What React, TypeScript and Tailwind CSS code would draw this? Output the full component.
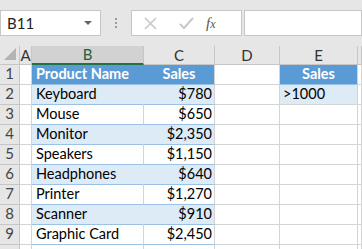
const rows: [string, string][] = [
  ['Keyboard', '$780'],
  ['Mouse', '$650'],
  ['Monitor', '$2,350'],
  ['Speakers', '$1,150'],
  ['Headphones', '$640'],
  ['Printer', '$1,270'],
  ['Scanner', '$910'],
  ['Graphic Card', '$2,450'],
];

const font = { fontFamily: 'Lato, "Liberation Sans", sans-serif' };

function Toolbar() {
  return (
    <div className="flex h-[46px] items-start bg-[#e6e6e6] pt-[10px]">
      <div className="flex h-[26px] w-[101px] items-center justify-between border border-[#c6c6c6] bg-white pl-[6px] pr-[8px] text-[15px] text-[#222]">
        <span>B11</span>
        <span className="h-0 w-0 border-x-[4px] border-t-[4px] border-x-transparent border-t-[#666]" />
      </div>
      <div className="flex h-[26px] w-[30px] flex-col items-center justify-center gap-[2px]">
        <span className="h-[2px] w-[2px] bg-[#9a9a9a]" />
        <span className="h-[2px] w-[2px] bg-[#9a9a9a]" />
        <span className="h-[2px] w-[2px] bg-[#9a9a9a]" />
      </div>
      <div className="flex h-[26px] w-[111px] items-center border border-[#c6c6c6] bg-white">
        <svg width="36" height="26" viewBox="0 0 36 26" className="shrink-0">
          <path d="M13 8 L24 19 M24 8 L13 19" stroke="#c8c8c8" strokeWidth="1.6" />
        </svg>
        <svg width="36" height="26" viewBox="0 0 36 26" className="shrink-0">
          <path d="M12 14 L16 18 L25 8" stroke="#c8c8c8" strokeWidth="2" fill="none" />
        </svg>
        <span
          className="ml-[2px] text-[15px] italic text-[#555]"
          style={{ fontFamily: '"Liberation Serif", serif' }}
        >
          f<span className="text-[12px]">x</span>
        </span>
      </div>
      <div className="ml-[2px] h-[26px] flex-1 border border-[#c6c6c6] bg-white" />
    </div>
  );
}

function Header() {
  const hd = 'flex items-center justify-center border-r border-b border-[#c6c6c6] bg-[#e6e6e6] text-[15px] text-[#333]';
  return (
    <>
      <div className={hd + ' relative'}>
        <svg width="12" height="12" viewBox="0 0 12 12" className="absolute bottom-[4px] right-[3px]">
          <path d="M12 0 L12 12 L0 12 Z" fill="#b4b4b4" />
        </svg>
      </div>
      <div className={hd}>A</div>
      <div className="flex items-center justify-center border-r border-b-2 border-r-[#c6c6c6] border-b-[#217346] bg-[#d2d2d2] text-[15px] text-[#1e5e3a]">
        B
      </div>
      <div className={hd}>C</div>
      <div className={hd}>D</div>
      <div className={hd}>E</div>
      <div className={hd} />
    </>
  );
}

export default function App() {
  const rn = 'flex items-end justify-center pb-[3px] border-r border-b border-[#c6c6c6] bg-[#e6e6e6] text-[15px] text-[#444]';
  const grid = 'border-r border-b border-[#d4d4d4] bg-white';
  const cell = 'flex items-end pb-[3px] text-[14.5px]';
  return (
    <div className="h-[249px] w-[362px] overflow-hidden bg-white" style={font}>
      <Toolbar />
      <div className="grid grid-cols-[20px_12px_112px_71px_65px_78px_1fr] grid-rows-[19px_repeat(10,20px)] leading-none">
        <Header />
        {/* row 1 */}
        <div className={rn}>1</div>
        <div className={grid} />
        <div className={`${cell} border-b border-[#9bc2e6] bg-[#5b9bd5] pl-[4px] font-bold text-white`}>
          Product Name
        </div>
        <div className={`${cell} justify-center border-r border-b border-r-[#d4d4d4] border-b-[#9bc2e6] bg-[#5b9bd5] font-bold text-white`}>
          Sales
        </div>
        <div className={grid} />
        <div className={`${cell} justify-center border-r border-b border-r-[#d4d4d4] border-b-[#9bc2e6] bg-[#5b9bd5] font-bold text-white`}>
          Sales
        </div>
        <div className={grid} />
        {rows.map(([name, sales], i) => {
          const tint = i % 2 === 0;
          const bg = tint ? 'bg-[#ddebf7]' : 'bg-white';
          return (
            <div key={name} className="contents">
              <div className={rn}>{i + 2}</div>
              <div className={grid} />
              <div
                className={`${cell} border-r border-b border-b-[#9bc2e6] pl-[4px] text-black ${bg} ${
                  tint ? 'border-r-[#ddebf7]' : 'border-r-[#d4d4d4]'
                }`}
              >
                {name}
              </div>
              <div
                className={`${cell} justify-end border-r border-b border-r-[#d4d4d4] border-b-[#9bc2e6] pr-[2px] text-black ${bg}`}
              >
                {sales}
              </div>
              <div className={grid} />
              {i === 0 ? (
                <div className={`${cell} border-r border-b border-[#d4d4d4] bg-[#ddebf7] pl-[3px] text-black`}>
                  &gt;1000
                </div>
              ) : (
                <div className={grid} />
              )}
              <div className={grid} />
            </div>
          );
        })}
        <div className={rn} />
        <div className={grid} />
        <div className={grid} />
        <div className={grid} />
        <div className={grid} />
        <div className={grid} />
        <div className={grid} />
      </div>
    </div>
  );
}
